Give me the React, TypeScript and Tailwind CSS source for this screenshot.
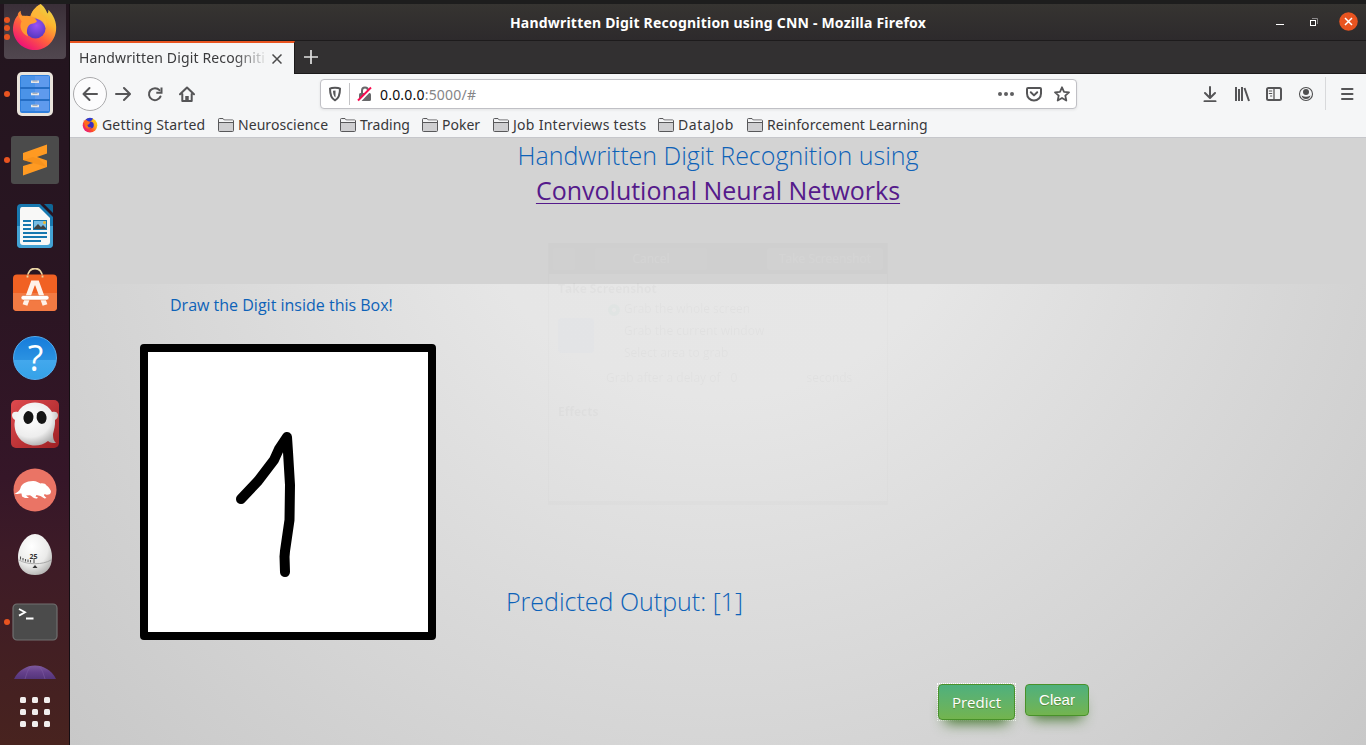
import React from "react";

const dock = "flex h-[66px] w-full shrink-0 items-center justify-center";

function Dot({ className = "" }: { className?: string }) {
  return <span className={`absolute left-[4px] h-[6px] w-[6px] rounded-full bg-[#e95420] ${className}`} />;
}

function FirefoxLogo({ size, id }: { size: number; id: string }) {
  return (
    <svg width={size} height={size} viewBox="0 0 48 48" className="shrink-0">
      <defs>
        <linearGradient id={id + "a"} x1="0.85" y1="0.05" x2="0.25" y2="0.95">
          <stop offset="0" stopColor="#e8d44a" />
          <stop offset="0.3" stopColor="#fdb52e" />
          <stop offset="0.62" stopColor="#ff623c" />
          <stop offset="1" stopColor="#ee1177" />
        </linearGradient>
        <radialGradient id={id + "b"} cx="0.55" cy="0.35" r="0.6">
          <stop offset="0" stopColor="#9a52f5" />
          <stop offset="1" stopColor="#5b3ac4" />
        </radialGradient>
      </defs>
      <path d="M30 0c5 4 6 8 7 10 1-1 1-3 1-4 5 5 9 13 8 21C45 39 35 48 24 48 12 48 2 39 1 27 1 19 4 14 6 12c0-2 1-4 3-5 0 3 1 4 2 6 3-1 6-1 8 0 1-4 5-10 11-13z" fill={`url(#${id}a)`} />
      <circle cx="24.500" cy="25.500" r="10.500" fill={`url(#${id}b)`} />
      <path d="M7 11c3 2 8 1 13 2 3 1 5 3 6 5-2 3-6 2-8 4-3 3-3 9-1 12-7-3-10-10-7-16-1-2-3-4-3-7z" fill="#ff9a30" />
      <path d="M27 16c4 1 7 5 8 9 3-7-1-12-6-15 0-3 0-6 1-10-6 3-10 9-10 13 3 0 6 1 7 3z" fill="#fcb83b" opacity="0.8" />
    </svg>
  );
}

function Favicon() {
  return (
    <svg width="16" height="16" viewBox="0 0 16 16" className="shrink-0">
      <defs><linearGradient id="fav" x1="1" y1="0" x2="0" y2=".8"><stop stopColor="#ffe900" /><stop offset=".35" stopColor="#ffb01f" /><stop offset=".65" stopColor="#ff4a2c" /><stop offset="1" stopColor="#e3128a" /></linearGradient></defs>
      <circle cx="8" cy="8.300" r="7.300" fill="url(#fav)" />
      <path d="M3.500 2.500Q7-.5 11 1.500q-1 3-4.500 3z" fill="#2f3ad0" />
      <circle cx="8.200" cy="8" r="3.600" fill="#3b2fc0" />
      <path d="M1.500 3.500L4 4.200l4 .8-.7 2-2 1 1.200 2.200 3 .3c-2 2-5 1.500-6.500-1z" fill="#ff6a1c" />
    </svg>
  );
}

function Folder() {
  return (
    <svg width="16" height="14" viewBox="0 0 16 14" fill="#cfcfd1" stroke="#58585a" strokeWidth="1" className="shrink-0">
      <path d="M.5 12V1.500Q.5.500 1.500.500H5l1.300 1.500h8.200q1 0 1 1V12.500q0 1-1 1h-13q-1 0-1-1z" />
      <path d="M1 1.200h3.700L6 2.600h9v1.900H1z" fill="#f5f6f7" stroke="none" />
      <path d="M.5 4.500h15" />
    </svg>
  );
}

function DockBar() {
  return (
    <aside className="flex w-[70px] shrink-0 flex-col overflow-hidden border-r border-[#150e13] bg-[linear-gradient(180deg,#22151e_0%,#2a1522_38%,#351628_64%,#3d1b27_74%,#48231f_100%)]">
      <div className="relative flex h-[57px] shrink-0 justify-center">
        <div className="flex h-[55px] w-[62px] justify-center rounded-b-[4px] bg-gradient-to-b from-[#3a2f38] to-[#51474f]">
          <FirefoxLogo size={46} id="dock" />
        </div>
        <Dot className="top-[13px]" />
        <Dot className="top-[21px]" />
        <Dot className="top-[30px]" />
      </div>
      <div className={"relative " + dock}>
        <Dot />
        <svg width="38" height="46" viewBox="0 0 38 46">
          <rect x="1" y="1" width="36" height="44" rx="5" fill="#e9e4dc" />
          <rect x="4" y="4" width="30" height="38" rx="2" fill="#2f7fdc" />
          <path d="M5 5h28v11H5zM5 18h28v10H5zM5 30h28v10H5z" fill="#4b93e8" />
          <path d="M19 5h14v11H19zM19 18h14v10H19zM19 30h14v10H19z" fill="#689cf0" opacity=".7" />
          <path d="M4 17h30M4 29h30" stroke="#1c5cab" />
          <path d="M15 9.500h8v2.500h-8zM15 21.800h8v2.500h-8zM15 33.800h8v2.500h-8z" fill="#e8e8e8" />
          <path d="M16.500 9.500h5v1h-5zM16.500 21.800h5v1h-5zM16.500 33.800h5v1h-5z" fill="#8f9aa8" />
        </svg>
      </div>
      <div className={"relative " + dock}>
        <Dot />
        <svg width="48" height="48" viewBox="0 0 48 48">
          <rect width="48" height="48" rx="3" fill="#4b4b4b" />
          <path d="M12 17l24-8.500v9L26 21l10 3.500v6.500L12 39.500V30l10-3-10-3z" fill="#ff9a22" />
          <path d="M22 27l14 4-8-8-6-2-10 3z" fill="#e88313" opacity=".35" />
        </svg>
      </div>
      <div className={dock}>
        <svg width="38" height="46" viewBox="0 0 38 46">
          <path d="M5 1h19l13 13v27q0 4-4 4H5q-4 0-4-4V5q0-4 4-4z" fill="#1878af" />
          <path d="M1 23h36v18q0 4-4 4H5q-4 0-4-4z" fill="#43a2d4" />
          <path d="M25 0h13v12z" fill="#2a1522" />
          <path d="M28 1h7q2 0 2 2v7z" fill="#0f6797" />
          <path d="M6 4h17l11 11v24q0 3-3 3H7q-3 0-3-3V7q0-3 2-3z" fill="#f8f8f7" />
          <path d="M7 18h8M7 22h8M7 26h8M7 30h24M7 34h24M7 38h18" stroke="#1878af" strokeWidth="1.800" />
          <path d="M17 17h14v10H17z" fill="#1675a9" />
          <path d="M18 18h12v8H18z" fill="#78bde3" />
          <path d="M18 25l4-4 3 3 2-2 3 3v1H18z" fill="#404343" />
          <circle cx="28.500" cy="19.500" r="1.500" fill="#efb92c" />
        </svg>
      </div>
      <div className={dock}>
        <svg width="46" height="48" viewBox="0 0 46 48">
          <path d="M15.500 9.500c0-12 15-12 15 0" fill="none" stroke="#ead6a5" strokeWidth="1.800" />
          <rect x="1" y="6.500" width="44" height="36.500" rx="4" fill="#f16123" />
          <path d="M1 25h44v14q0 4-4 4H5q-4 0-4-4z" fill="#f37a43" />
          <path d="M15.500 9.500V7.500M30.500 9.500V7.500" stroke="#ead6a5" strokeWidth="1.800" />
          <path d="M13 37l8-22h4l8 22" fill="none" stroke="#fff2e9" strokeWidth="5" />
          <rect x="9" y="27.500" width="28" height="4.500" rx="2.200" fill="#fff" stroke="#dc672f" strokeWidth=".5" />
        </svg>
      </div>
      <div className={dock}>
        <div className="flex h-[44px] w-[44px] items-center justify-center rounded-full border border-[#52adf0] bg-[linear-gradient(180deg,#167cdb_0%,#2b92e1_54%,#43a8ed_55%,#35a2e8_100%)] pl-[2px] font-['Open_Sans',sans-serif] text-[36px] leading-none text-white">?</div>
      </div>
      <div className={dock}>
        <svg width="48" height="48" viewBox="0 0 48 48">
          <defs>
            <radialGradient id="ghost" cx=".4" cy=".35" r=".7"><stop stopColor="#fff" /><stop offset=".65" stopColor="#ededed" /><stop offset="1" stopColor="#aaa" /></radialGradient>
            <linearGradient id="red" x2="1" y2="1"><stop stopColor="#df4a4e" /><stop offset="1" stopColor="#9e2023" /></linearGradient>
          </defs>
          <rect width="48" height="48" rx="5" fill="url(#red)" />
          <path d="M24 2.500c8 0 14 4 17 9.500 3-1 6 0 6 3 0 2-1 4-3 5 .5 5-1 10-2 14 0 5 1 7 3 9-3 0-6 0-8-2-4 3-8 4.500-13 4.500C12 45.500 3.500 36 3.500 24l.5-4c-2-1-3-3-3-5 0-3 3-4 6-3 3-5.500 9-9.500 17-9.500z" fill="url(#ghost)" />
          <ellipse cx="17.500" cy="17.500" rx="5" ry="6.500" fill="#151515" transform="rotate(8 17 17)" />
          <ellipse cx="30.500" cy="17.500" rx="5" ry="6.500" fill="#151515" transform="rotate(-8 30 17)" />
        </svg>
      </div>
      <div className={dock}>
        <svg width="44" height="44" viewBox="0 0 44 44">
          <circle cx="22" cy="22" r="21.500" fill="#ea7465" />
          <path d="M1.500 26c2-1.500 5-2.500 6-6 1-4 6-7.200 13-7 3 0 5 1.500 7 2.500 3-.5 5 .5 6 2 2 1 3 3 4.500 5.500 0 3-1.500 4-4.500 3.800l-2-.8-.5 1.500 2.500 2.500-2 .5-4-2.500-4-1-1 1.500 2.500 1-1 1c-3 .3-4-1-5-2l-2-1.200-4 .2 3 2.500h-4L9 28.500l-.5-3c-2 0-4 .8-7 .5z" fill="#fff" />
        </svg>
      </div>
      <div className={dock}>
        <div className="relative -mt-[3px] h-[41px] w-[34px]">
          <svg width="34" height="41" viewBox="0 0 34 41">
            <defs><radialGradient id="egg" cx=".4" cy=".3" r=".8"><stop stopColor="#fff" /><stop offset=".6" stopColor="#ebebea" /><stop offset="1" stopColor="#a8a8a6" /></radialGradient></defs>
            <path d="M17 0c9 0 17 12 17 23 0 12-7 18-17 18S0 35 0 23C0 12 8 0 17 0z" fill="url(#egg)" />
            <path d="M1 26c8 5 24 5 32 0" fill="none" stroke="#989898" strokeWidth=".8" />
            <path d="M2.500 22.500v3M5 24v2.500M7.500 25v2.500M10 25.500v2.500M12.500 26v2.500M16 25v4" stroke="#555" strokeWidth="1.100" />
            <path d="M17 31l2.500 3h-5z" fill="#333" />
          </svg>
          <span className="absolute left-[12px] top-[19px] font-['Open_Sans',sans-serif] text-[7px] font-bold leading-none text-[#333]">25</span>
        </div>
      </div>
      <div className={"relative " + dock}>
        <Dot />
        <svg width="46" height="38" viewBox="0 0 46 38">
          <rect x="1" y="1" width="44" height="36" rx="4" fill="#4b4b4b" stroke="#707070" strokeWidth="1.200" />
          <path d="M7 6l6 3.300L7 12.600M14 15.500h7.500" fill="none" stroke="#fff" strokeWidth="1.800" />
        </svg>
      </div>
      <div className="flex h-[24px] shrink-0 items-end justify-center">
        <svg width="42" height="14" viewBox="0 0 42 14">
          <defs><linearGradient id="orb" x2="0" y2="1"><stop stopColor="#7d5a9c" /><stop offset=".5" stopColor="#65408b" /><stop offset="1" stopColor="#54357a" /></linearGradient></defs>
          <path d="M0 14C9-4 33-4 42 14z" fill="url(#orb)" />
          <path d="M11 14Q13 5 17 1M25 1q4 4 6 13" fill="none" stroke="#7d5aa0" strokeWidth="1" opacity=".6" />
        </svg>
      </div>
      <div className={dock}>
        <div className="grid grid-cols-3 gap-[6px]">
          {Array.from({ length: 9 }, (_, i) => <span key={i} className="h-[6px] w-[6px] rounded-[1.500px] bg-[#f1eeed]" />)}
        </div>
      </div>
    </aside>
  );
}

function TitleBar() {
  return (
    <header className="relative flex h-[37px] shrink-0 items-center justify-center border-b border-[#1d1b1c] bg-gradient-to-b from-[#363431] to-[#2d2a2c]">
      <h1 className="whitespace-nowrap pt-px text-[14px] font-bold tracking-[.21px] text-white">Handwritten Digit Recognition using CNN - Mozilla Firefox</h1>
      <div className="absolute right-[8px] top-[8px] flex items-center">
        <span className="mt-[5px] h-px w-[8px] bg-white" />
        <svg className="ml-[26px]" width="8" height="8" viewBox="0 0 8 8" fill="none"><path d="M2 .5h5.500V6" stroke="#8c8a8b" /><rect x=".5" y="2.500" width="5" height="5" stroke="#fff" /></svg>
        <svg className="ml-[21px]" width="19" height="19" viewBox="0 0 19 19"><circle cx="9.500" cy="9.500" r="9.300" fill="#e95420" /><path d="M6 6l7 7M13 6l-7 7" stroke="#fff" strokeWidth="1.500" /></svg>
      </div>
    </header>
  );
}

function Tabs() {
  return (
    <div className="flex h-[33px] shrink-0 border-b border-[#1c1a1b] bg-[#323031]">
      <div className="-mb-px flex w-[225px] shrink-0 items-center border-r border-[#1c1a1b] border-t-2 border-t-[#e95420] bg-[#f5f6f7] pl-[9px]">
        <div className="-mt-[2px] w-[187px] whitespace-nowrap text-[14px] leading-[20px] tracking-[.14px] text-[#3b3b3d] [mask-image:linear-gradient(90deg,#000_155px,transparent_190px)]">Handwritten Digit Recogniti</div>
        <svg className="ml-[6px] shrink-0" width="10" height="10" viewBox="0 0 10 10" stroke="#4a4a4b" strokeWidth="1.500"><path d="M.5.500l9 9M9.500.500l-9 9" /></svg>
      </div>
      <svg className="ml-[9px] mt-[9px]" width="14" height="14" viewBox="0 0 14 14" stroke="#e1e1e1" strokeWidth="1.700"><path d="M7 0v14M0 7h14" /></svg>
    </div>
  );
}

const ic = { width: 16, height: 16, viewBox: "0 0 16 16", fill: "none", stroke: "#555557", strokeWidth: 2, strokeLinecap: "round", strokeLinejoin: "round" } as const;

function NavBar() {
  return (
    <nav className="flex h-[39px] shrink-0 items-center bg-[#f5f6f7] pl-[3px]">
      <div className="mt-px flex h-[34px] w-[34px] items-center justify-center rounded-full border border-[#aaaaac] bg-[#fcfcfd]">
        <svg {...ic}><path d="M15 8H1.500M7.500 2l-6 6 6 6" /></svg>
      </div>
      <svg {...ic} className="ml-[8px] mt-px"><path d="M1 8h13.500M9 2l6 6-6 6" /></svg>
      <svg {...ic} className="ml-[16px] mt-px"><path d="M12.500 4.200A6 6 0 1 0 13.500 10.500" /><path d="M14.500 1.500v5.200H9.300" strokeLinejoin="miter" strokeLinecap="butt" /></svg>
      <svg {...ic} className="ml-[16px] mt-px"><path d="M1 8.300l7-6.800 7 6.800M3.300 8V15h9.400V8" /><path d="M8 14.500v-4.500" strokeWidth="3.500" strokeLinecap="butt" /></svg>
      <div className="ml-[125px] mt-px flex h-[30px] w-[757px] items-center rounded-[4px] border border-[#c0c0c5] bg-white pl-[6px] shadow-[0_1px_3px_rgba(0,0,0,.08)]">
        <svg {...ic}><path d="M8 1.800c-2 0-4 .2-5 .8C3 9 4 12.500 8 14.300 12 12.500 13 9 13 2.600c-1-.6-3-.8-5-.8z" /><path d="M8.500 4.500v7c-1.600-1-2.300-3-2.500-6.700z" fill="#58585a" stroke="none" /></svg>
        <span className="ml-[6px] h-[22px] w-px bg-[#c4c4c6]" />
        <svg className="ml-[7px]" width="16" height="16" viewBox="0 0 16 16"><path d="M5 7V4.500a3 3 0 0 1 6 0V7" fill="none" stroke="#68686a" strokeWidth="2" /><rect x="2" y="7" width="12" height="8" rx="1.500" fill="#68686a" /><path d="M2.500 15L15 2" stroke="#fff" strokeWidth="3" /><path d="M1 14.500L14 1.500" stroke="#f90b50" strokeWidth="2" /></svg>
        <span className="ml-[7px] whitespace-nowrap text-[14px] tracking-[.2px] text-[#858587]"><span className="text-[#0c0c0d]">0.0.0.0</span>:5000/#</span>
        <span className="flex-1" />
        <svg width="16" height="16" viewBox="0 0 16 16" fill="#5f5f61"><circle cx="2" cy="8" r="2" /><circle cx="8" cy="8" r="2" /><circle cx="14" cy="8" r="2" /></svg>
        <svg {...ic} className="ml-[12px]"><path d="M2 2h12q1 0 1 1v4.500a7 7 0 0 1-14 0V3q0-1 1-1z" /><path d="M4.800 6.300L8 9.400l3.200-3.100" /></svg>
        <svg {...ic} className="ml-[12px] mr-[6px]"><path d="M8 1.300l2 4.500 5 .5-3.700 3.300 1 4.900L8 12l-4.300 2.500 1-4.900L1 6.300l5-.5z" strokeWidth="1.800" /></svg>
      </div>
      <svg {...ic} className="ml-[125px] mt-px"><path d="M8 1v10.500M3 7l5 5 5-5M2.500 15.200h11" /></svg>
      <svg {...ic} className="ml-[16px] mt-px" strokeLinecap="butt"><path d="M2 1v14M5 3v12M8 1v14M10.500 2L15 15" /></svg>
      <svg {...ic} className="ml-[16px] mt-px"><rect x="1" y="2" width="14" height="12" rx="1.500" /><path d="M8 2v12" strokeWidth="1.300" /><path d="M3.200 5h2.600M3.200 7.500h2.600M4.500 10h1.300" strokeWidth="1" /></svg>
      <svg className="ml-[16px] mt-px" width="16" height="16" viewBox="0 0 16 16"><circle cx="8" cy="8" r="6.500" fill="none" stroke="#4f4f50" strokeWidth="1.100" /><circle cx="8" cy="6" r="3" fill="#4f4f50" /><path d="M3.500 9.500q4.500 2.500 9 0-1 3.500-4.500 3.500t-4.500-3.500" fill="#4f4f50" /></svg>
      <span className="ml-[11px] h-[33px] w-px bg-[#d8d9db]" />
      <svg {...ic} className="ml-[13px] mt-px"><path d="M3 3h10.500M3 8h10.500M3 13h10.500" /></svg>
    </nav>
  );
}

function Bookmark({ children, className }: { children: string; className: string }) {
  return <div className={"flex shrink-0 items-center gap-[4px] whitespace-nowrap " + className}><Folder />{children}</div>;
}

function Bookmarks() {
  return (
    <div className="flex h-[25px] shrink-0 items-center border-b border-[#c6c7cb] bg-[#f5f6f7] pl-[12px] text-[14px] leading-[20px] text-[#38383a]">
      <div className="flex w-[136px] shrink-0 items-center gap-[4px] whitespace-nowrap tracking-[.18px]"><Favicon />Getting Started</div>
      <Bookmark className="w-[122px] tracking-[.06px]">Neuroscience</Bookmark>
      <Bookmark className="w-[82px]">Trading</Bookmark>
      <Bookmark className="w-[71px]">Poker</Bookmark>
      <Bookmark className="w-[165px] tracking-[.28px]">Job Interviews tests</Bookmark>
      <Bookmark className="w-[89px] tracking-[.6px]">DataJob</Bookmark>
      <Bookmark className="tracking-[.08px]">Reinforcement Learning</Bookmark>
    </div>
  );
}

function FadingDialog() {
  return (
    <div className="pointer-events-none absolute left-[478px] top-[105px] h-[262px] w-[340px] border-x border-b-4 border-black/50 text-[12px] text-black opacity-[.02]">
      <div className="flex h-[31px] items-center justify-between bg-black/80 px-[4px] text-white">
        <span className="h-[22px] w-[22px] rounded bg-white/30" />
        <span className="w-[112px] rounded bg-white/30 py-[2px] text-center">Cancel</span>
        <span className="w-[20px]" />
        <span className="w-[116px] rounded bg-white/50 py-[2px] text-center">Take Screenshot</span>
      </div>
      <div className="px-[9px] pt-[4px] leading-[22px]">
        <b className="block h-[20px]">Take Screenshot</b>
        <div className="flex">
          <span className="mr-[14px] mt-[20px] h-[35px] w-[36px] rounded bg-blue-500/70" />
          <span className="mr-[4px] mt-[6px] h-[12px] w-[12px] rounded-full border-4 border-emerald-600" />
          <div><p>Grab the whole screen</p><p>Grab the current window</p><p>Select area to grab</p></div>
        </div>
        <p className="flex gap-[10px] pl-[48px] pt-[3px]">Grab after a delay of<span className="w-[66px]">0</span>seconds</p>
        <b className="mt-[12px] block">Effects</b>
      </div>
    </div>
  );
}

function DigitPage() {
  return (
    <main className="relative flex min-h-0 flex-1 flex-col bg-[#d3d3d3] font-['Open_Sans',sans-serif]">
      <div className="h-[146px] shrink-0 text-center text-[25px] font-light leading-[35px]">
        <p className="text-[#0d62b8]">Handwritten Digit Recognition using</p>
        <a className="font-normal text-[#551a8b] underline decoration-1 underline-offset-[3px]">Convolutional Neural Networks</a>
      </div>
      <section className="flex min-h-0 flex-1 bg-[radial-gradient(circle_at_648px_-146px,#e7e7e7_0px,#e6e6e6_260px,#c8c8c8_888px)]">
        <div className="w-[436px] shrink-0 pl-[70px] pt-[9px]">
          <p className="pl-[30px] text-[16px] leading-[24px] text-[#0d62b8]">Draw the Digit inside this Box!</p>
          <div className="mt-[27px] h-[296px] w-[296px] rounded-[4px] border-8 border-black bg-white">
            <svg width="280" height="280" viewBox="0 0 280 280" fill="none" stroke="#000" strokeWidth="10" strokeLinecap="round" strokeLinejoin="round">
              <path d="M93 147l17-18 16-21 5-11 8-12 1 15 2 33-.5 35-4.500 31-.5 6M136.500 204l.5 16" />
            </svg>
          </div>
        </div>
        <div className="flex flex-1 flex-col">
          <p className="mt-[300px] text-[25px] font-light leading-[35px] text-[#0d62b8]">Predicted Output: [1]</p>
          <div className="ml-[431px] mt-[64px] flex items-start gap-[9px]">
            <button className="h-[38px] w-[79px] border border-dotted border-white"><span className="flex h-[36px] items-center justify-center rounded-[4px] border border-[#48912a] bg-gradient-to-b from-[#4eb07d] to-[#73b44e] text-[15px] text-white shadow-[0_10px_14px_-7px_#3e7327] [text-shadow:0_1px_0_#5b8a3c]">Predict</span></button>
            <button className="mt-px h-[32px] w-[64px] rounded-[4px] border border-[#48912a] bg-gradient-to-b from-[#4eb07d] to-[#73b44e] font-['Liberation_Sans',sans-serif] text-[15px] text-white shadow-[0_10px_14px_-7px_#3e7327] [text-shadow:0_1px_0_#5b8a3c]">Clear</button>
          </div>
        </div>
      </section>
      <FadingDialog />
    </main>
  );
}

export default function App() {
  return (
    <div className="flex h-[745px] w-[1366px] flex-col overflow-hidden bg-[#1d1d1d] pt-[4px] font-['Noto_Sans','Open_Sans',sans-serif]">
      <div className="flex min-h-0 flex-1">
        <DockBar />
        <div className="flex min-w-0 flex-1 flex-col">
          <TitleBar />
          <Tabs />
          <NavBar />
          <Bookmarks />
          <DigitPage />
        </div>
      </div>
    </div>
  );
}
